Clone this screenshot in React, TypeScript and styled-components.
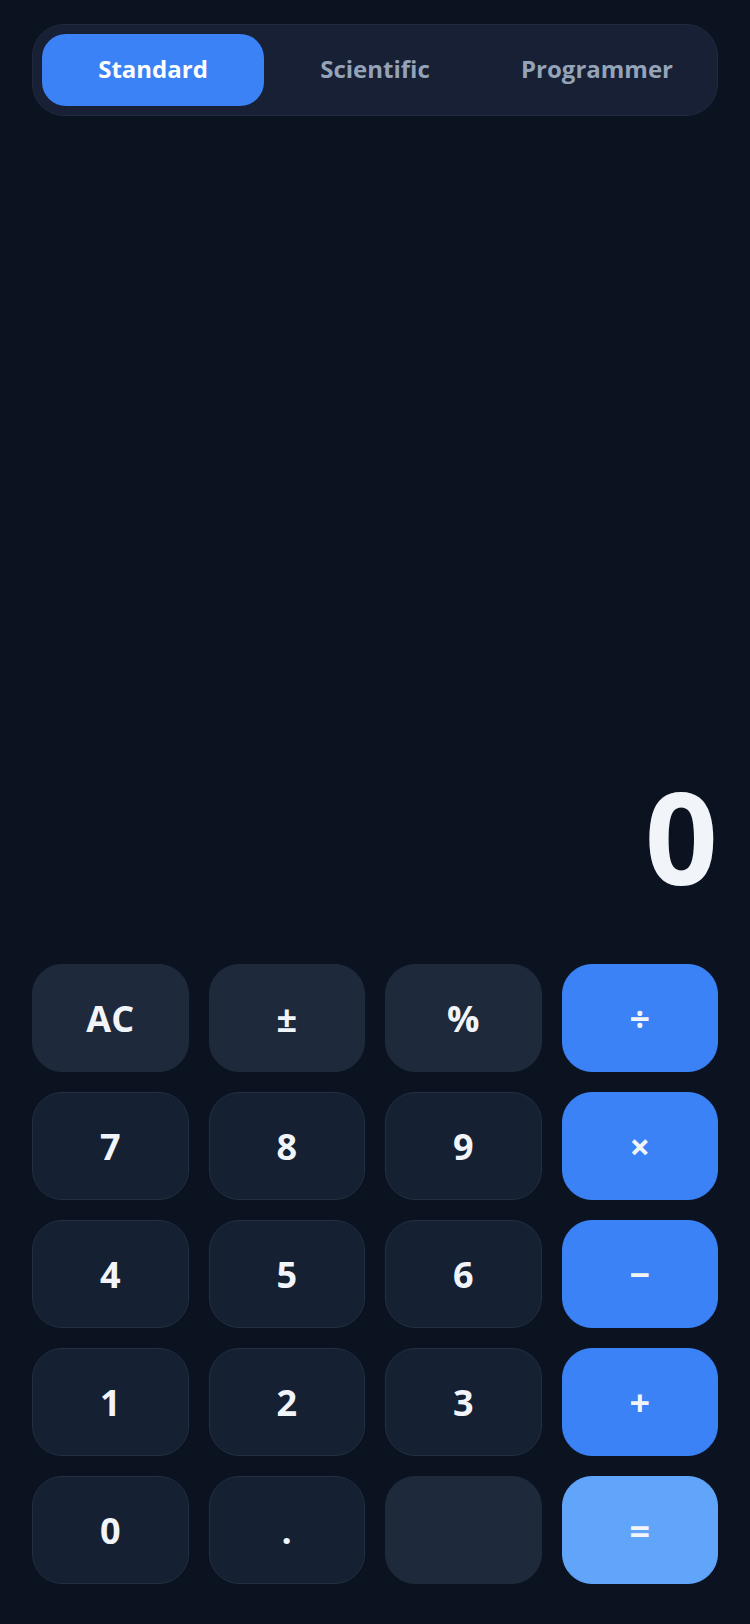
import React, { useState } from "react";
import styled, { createGlobalStyle, css } from "styled-components";

const Global = createGlobalStyle`
  html, body {
    margin: 0;
    padding: 0;
    background: #0b1220;
  }
  * { box-sizing: border-box; }
  #root { min-height: 100vh; }
`;

const Page = styled.div`
  min-height: 100vh;
  display: flex;
  flex-direction: column;
  padding: 24px 32px 40px;
  background: #0b1220;
  font-family: "Open Sans", "Noto Sans", sans-serif;
`;

const TabBar = styled.div`
  display: flex;
  padding: 9px;
  height: 92px;
  border-radius: 32px;
  background: #172034;
  border: 1px solid #1f2a3e;
`;

const Tab = styled.button<{ $active?: boolean }>`
  flex: 1 1 0;
  height: 72px;
  border: none;
  border-radius: 24px;
  padding: 0 0 4px;
  font-family: inherit;
  font-size: 24px;
  font-weight: 700;
  cursor: pointer;
  background: ${(p) => (p.$active ? "#3b82f6" : "transparent")};
  color: ${(p) => (p.$active ? "#ffffff" : "#94a3b8")};
`;

const Display = styled.div`
  flex: 1;
  display: flex;
  align-items: flex-end;
  justify-content: flex-end;
  padding-bottom: 64px;
`;

const Value = styled.div`
  font-size: 128px;
  line-height: 1;
  font-weight: 700;
  color: #f1f5f9;
`;

const Keypad = styled.div`
  display: grid;
  grid-template-columns: repeat(4, 1fr);
  grid-auto-rows: 108px;
  gap: 20px;
`;

type Kind = "fn" | "digit" | "op" | "eq" | "blank";

const kindStyles: Record<Kind, ReturnType<typeof css>> = {
  fn: css`
    background: #1e293b;
    border: 1px solid #1f2a3c;
  `,
  digit: css`
    background: #152033;
    border: 1px solid #232e42;
  `,
  op: css`
    background: #3b82f6;
    border: 1px solid #3b82f6;
  `,
  eq: css`
    background: #60a5fa;
    border: 1px solid #60a5fa;
  `,
  blank: css`
    background: #1e293b;
    border: 1px solid #1e293b;
  `,
};

const Key = styled.button<{ $kind: Kind }>`
  display: flex;
  align-items: center;
  justify-content: center;
  border-radius: 30px;
  font-family: inherit;
  font-size: 36px;
  font-weight: 700;
  color: #f1f5f9;
  cursor: pointer;
  padding: 0;
  ${(p) => kindStyles[p.$kind]}
`;

const keys: { label: string; kind: Kind }[] = [
  { label: "AC", kind: "fn" },
  { label: "±", kind: "fn" },
  { label: "%", kind: "fn" },
  { label: "÷", kind: "op" },
  { label: "7", kind: "digit" },
  { label: "8", kind: "digit" },
  { label: "9", kind: "digit" },
  { label: "×", kind: "op" },
  { label: "4", kind: "digit" },
  { label: "5", kind: "digit" },
  { label: "6", kind: "digit" },
  { label: "−", kind: "op" },
  { label: "1", kind: "digit" },
  { label: "2", kind: "digit" },
  { label: "3", kind: "digit" },
  { label: "+", kind: "op" },
  { label: "0", kind: "digit" },
  { label: ".", kind: "digit" },
  { label: "", kind: "blank" },
  { label: "=", kind: "eq" },
];

export default function App() {
  const [mode, setMode] = useState("Standard");
  return (
    <>
      <Global />
      <Page>
        <TabBar>
          {["Standard", "Scientific", "Programmer"].map((t) => (
            <Tab key={t} $active={mode === t} onClick={() => setMode(t)}>
              {t}
            </Tab>
          ))}
        </TabBar>
        <Display>
          <Value>0</Value>
        </Display>
        <Keypad>
          {keys.map((k, i) => (
            <Key key={i} $kind={k.kind}>
              {k.label}
            </Key>
          ))}
        </Keypad>
      </Page>
    </>
  );
}
